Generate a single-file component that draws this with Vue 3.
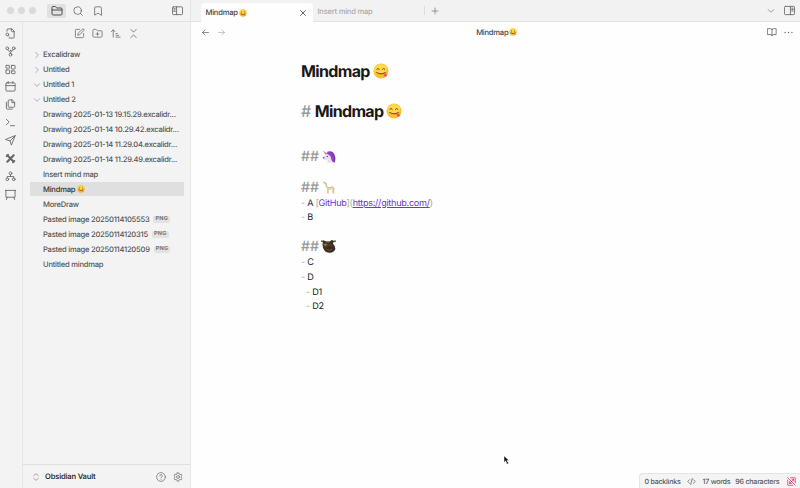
<script setup>
import { h } from 'vue'

const icons = {
  folder: '<path d="M20 20a2 2 0 0 0 2-2V8a2 2 0 0 0-2-2h-7.9a2 2 0 0 1-1.7-.9L9.600 3.900A2 2 0 0 0 7.900 3H4a2 2 0 0 0-2 2v13a2 2 0 0 0 2 2Z"/><path d="M2 10h20"/>',
  search: '<circle cx="11" cy="11" r="9"/><path d="m22.500 22.500-5-5"/>',
  bookmark: '<path d="m20 22-8-5-8 5V4a2 2 0 0 1 2-2h12a2 2 0 0 1 2 2Z"/>',
  left: '<rect x="1" y="4" width="22" height="17" rx="2"/><path d="M10 4v17M4 8h3M4 11h3M4 14h3"/>',
  right: '<rect x="1" y="3" width="22" height="18" rx="2"/><path d="M14 3v18M17 7h3M17 10h3M17 13h3"/>',
  fileSearch: '<path d="M14 2v4a2 2 0 0 0 2 2h4"/><path d="M4.300 7V4a2 2 0 0 1 2-2H15l5 5v13a2 2 0 0 1-2 2H9"/><circle cx="5" cy="14" r="3"/><path d="m9 18-1.500-1.500"/>',
  fork: '<circle cx="12" cy="19" r="3"/><circle cx="5" cy="5" r="3"/><circle cx="19" cy="5" r="3"/><path d="M6 8c1 4 6 3 6 8M18 8c-1 4-6 3-6 8"/><circle cx="12" cy="10" r="1"/>',
  grid: '<rect x="2" y="3" width="8" height="6" rx="1"/><rect x="14" y="3" width="8" height="8" rx="1"/><rect x="2" y="13" width="8" height="8" rx="1"/><rect x="14" y="15" width="8" height="6" rx="1"/>',
  calendar: '<path d="M7 1v4M17 1v4"/><rect x="2" y="4" width="20" height="18" rx="2"/><path d="M2 10h20"/>',
  files: '<path d="M15 2H9a2 2 0 0 0-2 2v12a2 2 0 0 0 2 2h10a2 2 0 0 0 2-2V8Z"/><path d="M15 2v6h6M3 7v13a2 2 0 0 0 2 2h11"/>',
  terminal: '<path d="m3 17 6-6-6-6M12 19h9"/>',
  send: '<path d="m22 2-8 20-3-9-9-3ZM22 2 11 13"/>',
  tools: '<path stroke-width="4.500" d="M5 5l14 14M19 5 5 19"/><path stroke-width="3" d="M3 7l4-4M17 21l4-4"/>',
  network: '<circle cx="12" cy="5" r="3"/><circle cx="5" cy="18" r="3"/><circle cx="19" cy="18" r="3"/><path d="M12 8v4M5 15v-3h14v3"/>',
  board: '<path d="M0 3h24M2 3v15h20V3M5 18l-2 5M19 18l2 5"/>',
  edit: '<path d="M12 3H5a2 2 0 0 0-2 2v14a2 2 0 0 0 2 2h14a2 2 0 0 0 2-2v-7"/><path d="M18.400 2.600a2 2 0 0 1 3 3L12 15l-4 1 1-4Z"/>',
  folderPlus: '<path d="M20 20a2 2 0 0 0 2-2V8a2 2 0 0 0-2-2h-8L9.600 3.900A2 2 0 0 0 7.900 3H4a2 2 0 0 0-2 2v13a2 2 0 0 0 2 2ZM12 10v6M9 13h6"/>',
  sort: '<path d="m3 8 4-4 4 4M7 4v16M13 12h3M13 16h6M13 20h9"/>',
  collapse: '<path d="m6 21 6-6 6 6M6 3l6 6 6-6"/>',
  chevron: '<path d="m4 8 8 8 8-8"/>',
  chevronRight: '<path d="m8 4 8 8-8 8"/>',
  upDown: '<path d="m5 16 7 6 7-6M5 8l7-6 7 6"/>',
  help: '<circle cx="12" cy="12" r="10.500"/><path d="M9 9a3 3 0 0 1 6 1c0 2-3 2-3 4M12 17.500v.2"/>',
  gear: '<path d="M10 2h4l.7 3 2 1.200 3-1 2 3.600-2.300 2v2.400l2.300 2-2 3.600-3-1-2 1.200-.7 3h-4l-.7-3-2-1.200-3 1-2-3.600 2.300-2v-2.400l-2.300-2 2-3.600 3 1 2-1.200Z"/><circle cx="12" cy="12" r="3.500"/>',
  close: '<path d="M18 6 6 18M6 6l12 12"/>',
  plus: '<path d="M3 12h18M12 3v18"/>',
  back: '<path d="m11 19-7-7 7-7M20 12H4"/>',
  forward: '<path d="m13 5 7 7-7 7M4 12h16"/>',
  book: '<path d="M12 6v15M2 4h7c2 0 3 1 3 3 0-2 1-3 3-3h7v14h-7c-2 0-3 1-3 3 0-2-1-3-3-3H2Z"/>',
  dots: '<path stroke-width="3.500" d="M3 12h.1M12 12h.1M21 12h.1"/>',
  code: '<path d="m17 17 5-5-5-5M7 7l-5 5 5 5M14 4l-4 16"/>',
  unsync: '<path d="M2 2l20 20M2 8v14h13M9 2h13v13M7 17 18 6M13 6h5v5M7 12v5h5"/>',
}

const emojis = {
  yum: '<circle cx="12" cy="12" r="11.300" fill="#f9bf2d"/><ellipse cx="11.500" cy="9.500" rx="9.500" ry="8" fill="#ffd94a"/><path d="M5.500 9.500q2-3 4 0M14 9.500q2-3 4 0" fill="none" stroke="#744114" stroke-width="1.500" stroke-linecap="round"/><path d="M5.500 14q6.500 4.500 13 0" fill="none" stroke="#8d481d" stroke-width="1.600" stroke-linecap="round"/><path d="M15.500 17q3-2.500 5 0 .8 3.500-1.500 4-3 0-3.500-4Z" fill="#ed5266"/>',
  yumSmall: '<circle cx="12" cy="12" r="11" fill="#f6b92c"/><ellipse cx="12" cy="8.500" rx="9" ry="6" fill="#ffd640"/><path d="M6 9h3M15 9h3" stroke="#80500f" stroke-width="2.500"/><path d="M5 14q7 6 14 0" fill="none" stroke="#935414" stroke-width="2.500"/><circle cx="17.500" cy="18" r="2" fill="#e8743f"/>',
  unicorn: '<path d="M1 1l8 5-2 3Z" fill="#a58bb0"/><path d="M9 3q9-3 12.500 5 3 7 0 14l-6-3q2-5-1-9Z" fill="#8a35b8"/><path d="M8 7q7-3 9 5 2 5 1 10H8l3-6-5 2-3-2 2-5Z" fill="#e9e0ec"/><path d="M8 4q9-1 11 8l1 9-4-4q0-7-7-10Z" fill="#9a42c4"/><circle cx="9" cy="11" r="1" fill="#36234d"/><path d="M1 13q2-3 4-1l-2 4Z" fill="#b565c8"/>',
  llama: '<path d="M3 1l2 3 3 1 1 8 9-2 4 3-1 9h-2.500l-1-7-6 1v6H9v-8l-3-3-1-6-4-1Z" fill="#e2d8b6"/><path d="M7 5l2 8 10-1 2 3M10 15v8M19 16v7" fill="none" stroke="#bfb083" stroke-width="1.100"/><circle cx="5" cy="5" r=".8" fill="#61573d"/>',
  sloth: '<path d="M0 3q12 4 24 0" fill="none" stroke="#5d6338" stroke-width="2.500"/><path d="M3 2l4 1 1 5 5-2 3-4 4 0-1 5q4 4 4 9-3 7-10 6-8-1-10-9Z" fill="#3c2b20"/><circle cx="7" cy="9" r="4.500" fill="#4d3b29"/><path d="M4 9q3-2.500 6 0-2 3-6 0Z" fill="#94805f"/><path d="M12 10q4-2 6 2M9 17q5 3 9-1" fill="none" stroke="#6a5136" stroke-width="1.500"/>',
}

const Icon = (props) =>
  h('svg', {
    viewBox: '0 0 24 24', width: props.size || 11, height: props.size || 11,
    fill: 'none', stroke: 'currentColor', 'stroke-width': 1.9,
    'stroke-linecap': 'round', 'stroke-linejoin': 'round', innerHTML: icons[props.name],
  })
Icon.props = ['name', 'size']

const Emoji = (props) =>
  h('svg', { viewBox: '0 0 24 24', width: props.size || 8, height: props.size || 8, innerHTML: emojis[props.name] })
Emoji.props = ['name', 'size']

const ribbon = ['fileSearch', 'fork', 'grid', 'calendar', 'files', 'terminal', 'send', 'tools', 'network', 'board']
const tree = [
  { label: 'Excalidraw', arrow: 'chevronRight' },
  { label: 'Untitled', arrow: 'chevronRight' },
  { label: 'Untitled 1', arrow: 'chevron' },
  { label: 'Untitled 2', arrow: 'chevron' },
  { label: 'Drawing 2025-01-13 19.15.29.excalidr...' },
  { label: 'Drawing 2025-01-14 10.29.42.excalidr...' },
  { label: 'Drawing 2025-01-14 11.29.04.excalidr...' },
  { label: 'Drawing 2025-01-14 11.29.49.excalidr...' },
  { label: 'Insert mind map' },
  { label: 'Mindmap', emoji: true, active: true },
  { label: 'MoreDraw' },
  { label: 'Pasted image 20250114105553', tag: 'PNG' },
  { label: 'Pasted image 20250114120315', tag: 'PNG' },
  { label: 'Pasted image 20250114120509', tag: 'PNG' },
  { label: 'Untitled mindmap' },
]
</script>

<template>
  <div class="window">
    <aside class="side">
      <header class="side-top">
        <i class="light"></i><i class="light"></i><i class="light"></i>
        <span class="folder-tab"><Icon name="folder" size="12" /></span>
        <Icon class="search" name="search" size="10" />
        <Icon class="bookmark" name="bookmark" size="10" />
        <Icon class="toggle" name="left" size="11" />
      </header>
      <div class="side-body">
        <nav class="ribbon">
          <span v-for="name in ribbon" :key="name"><Icon :name="name" /></span>
        </nav>
        <section class="explorer">
          <div class="tools">
            <Icon name="edit" /><Icon name="folderPlus" /><Icon name="sort" /><Icon name="collapse" />
          </div>
          <div class="tree">
            <div v-for="row in tree" :key="row.label" class="row" :class="{ active: row.active }">
              <span class="arrow"><Icon v-if="row.arrow" :name="row.arrow" size="8" /></span>
              <span class="label">{{ row.label }}</span>
              <Emoji v-if="row.emoji" class="row-emoji" name="yumSmall" />
              <b v-if="row.tag" class="tag">{{ row.tag }}</b>
            </div>
          </div>
          <footer class="vault">
            <Icon class="updown" name="upDown" size="8" />
            <b>Obsidian Vault</b>
            <Icon name="help" size="10" /><Icon name="gear" size="10" />
          </footer>
        </section>
      </div>
    </aside>

    <main class="main">
      <header class="tabs">
        <div class="tab current"><span>Mindmap</span><Emoji name="yumSmall" /><Icon class="close" name="close" size="10" /></div>
        <div class="tab idle"><span>Insert mind map</span></div>
        <Icon class="plus" name="plus" size="8" />
        <Icon class="down" name="chevron" size="8" />
        <Icon name="right" size="11" />
      </header>
      <div class="view-head">
        <div class="nav"><Icon name="back" size="9" /><Icon class="dim" name="forward" size="9" /></div>
        <div class="view-title"><span>Mindmap</span><Emoji name="yumSmall" /></div>
        <div class="actions"><Icon name="book" size="10" /><Icon name="dots" size="9" /></div>
      </div>
      <article class="editor">
        <div class="title"><span>Mindmap</span><Emoji name="yum" size="16" /></div>
        <div class="title h1"><span><i>#</i> Mindmap</span><Emoji name="yum" size="16" /></div>
        <div class="h2 first"><span>##</span><Emoji name="unicorn" size="14" /></div>
        <div class="h2"><span>##</span><Emoji name="llama" size="14" /></div>
        <div class="line"><i>-</i> A <i>[</i><em>GitHub</em><i>](</i><u>https://github.com/</u><i>)</i></div>
        <div class="line"><i>-</i> B</div>
        <div class="h2 third"><span>##</span><Emoji name="sloth" size="15" /></div>
        <div class="line"><i>-</i> C</div>
        <div class="line"><i>-</i> D</div>
        <div class="line nested"><i>-</i> D1</div>
        <div class="line nested"><i>-</i> D2</div>
      </article>
      <footer class="status">
        <span class="links">0 backlinks</span><Icon name="code" size="9" />
        <span class="words">17 words</span><span class="chars">96 characters</span>
        <Icon class="unsync" name="unsync" size="9" />
      </footer>
    </main>
    <svg class="cursor" viewBox="0 0 8 12" width="7" height="10"><path d="M1 1v8l2-2 1.500 4 2-1-2-3.500H7Z" fill="#111" stroke="#fff" stroke-width=".6" /></svg>
  </div>
</template>

<style>
body { margin: 0; overflow: hidden; }
</style>
<style scoped>
.window { width: 800px; height: 488px; display: flex; position: relative; overflow: hidden; background: #fefefe; color: #555; font: 500 7.6px/15px Inter, "Liberation Sans", sans-serif; letter-spacing: -.24px; text-rendering: geometricPrecision; }
.window * { box-sizing: border-box; }
svg { flex: none; display: block; }
i, em { font-style: normal; }
.side { width: 190.5px; flex: none; display: flex; flex-direction: column; background: #f3f3f3; border-right: 1px solid #e5e5e5; }
.side-top { height: 22px; flex: none; display: flex; align-items: center; border-bottom: 1px solid #e1e1e1; padding: 0 7px 0 6.500px; color: #666; }
.light { width: 7px; height: 7px; border-radius: 50%; background: #dadada; margin-right: 4.300px; }
.folder-tab { width: 19px; height: 14px; margin-left: 7px; border-radius: 2px; background: #e1e1e1; display: grid; place-items: center; color: #484848; }
.search { margin-left: 6.500px; }
.bookmark { margin-left: 10.500px; }
.toggle { margin-left: auto; }
.side-body { display: flex; flex: 1; min-height: 0; }
.ribbon { width: 23px; border-right: 1px solid #e5e5e5; padding: 2.500px 2px 0 0; color: #666; }
.ribbon span { height: 17.850px; display: grid; place-items: center; }
.explorer { flex: 1; min-width: 0; display: flex; flex-direction: column; }
.tools { height: 25px; flex: none; display: flex; align-items: center; justify-content: center; gap: 6.900px; padding: 0 0 2px; color: #777; }
.tree { flex: 1; padding: 0 6px 0 7px; }
.row { height: 15px; display: flex; align-items: center; white-space: nowrap; }
.row.active { height: 14px; margin: 0 0 1px; background: #dfdfdf; color: #333; }
.arrow { width: 13px; flex: none; padding-left: 2.500px; color: #888; }
.row-emoji { margin-left: 2px; }
.tag { margin-left: 4px; height: 7px; padding: 0 2px; background: #e2e2e2; border-radius: 2px; font-size: 5.5px; line-height: 7px; letter-spacing: .3px; color: #777; }
.vault { height: 24px; display: flex; align-items: center; gap: 7px; padding-right: 7px; border-top: 1px solid #dfdfdf; color: #777; }
.vault b { color: #333; margin-right: auto; font-weight: 600; margin-left: -2px; letter-spacing: -.19px; }
.updown { margin-left: 9px; }
.main { flex: 1; min-width: 0; display: flex; flex-direction: column; }
.tabs { height: 22px; flex: none; display: flex; align-items: center; background: #f2f2f2; border-bottom: 1px solid #e3e3e3; padding: 0 5px 0 10px; color: #666; }
.tab { display: flex; align-items: center; }
.current { width: 112px; height: 19px; align-self: flex-end; margin-bottom: -1px; padding: 0 5px 0 5px; gap: 2px; background: #fefefe; border-radius: 4px 4px 0 0; color: #444; }
.current > svg:first-of-type { margin-left: -1px; }
.tab .close { margin-left: auto; color: #444; }
.idle { width: 112px; height: 9px; border-right: 1px solid #ddd; padding: 2px 0 0 5px; color: #aaa; }
.plus { margin-left: 6px; }
.down { margin-left: auto; margin-right: 9px; }
.view-head { height: 20px; flex: none; display: grid; grid-template-columns: 1fr auto 1fr; align-items: center; color: #444; padding: 0 7px 0 10px; }
.nav { display: flex; gap: 7px; color: #666; }
.dim { opacity: .5; }
.view-title { display: flex; align-items: center; gap: 1px; }
.actions { display: flex; justify-content: flex-end; align-items: center; gap: 7px; color: #666; }
.editor { flex: 1; padding-left: 110.500px; color: #222; font-size: 9.1px; font-weight: 400; letter-spacing: -.27px; }
.editor i { color: #aaa; }
.title { display: flex; align-items: center; gap: 3.500px; height: 20px; margin-top: 18.500px; font-size: 16px; line-height: 20px; font-weight: 700; letter-spacing: -.65px; color: #181818; }
.title i { font-weight: 500; color: #999; margin-right: 1px; }
.title.h1 { margin-top: 20.500px; gap: 3px; }
.h2 { height: 15px; margin-top: 15.500px; display: flex; align-items: center; gap: 3.500px; font-size: 14px; color: #999; font-weight: 500; letter-spacing: 0; }
.h2.first { margin-top: 28px; }
.h2.third { margin-top: 14.500px; gap: 2.500px; }
.line { height: 14.900px; line-height: 17px; white-space: pre; }
.third ~ .line { line-height: 17.500px; }
.nested { padding-left: 5px; }
.line em, .line u { color: #6c38cf; text-underline-offset: 1px; }
.status { align-self: flex-end; height: 15px; width: 161px; display: flex; align-items: center; border: 1px solid #e4e4e4; border-width: 1px 0 0 1px; border-radius: 4px 0 0; background: #f4f4f4; padding: 0 4px 0 4.500px; white-space: nowrap; font-size: 7.1px; letter-spacing: -.24px; }
.links { margin-right: 6px; }
.words { margin-left: 7px; }
.chars { margin-left: 5px; }
.unsync { margin-left: auto; color: #d12f66; }
.cursor { position: absolute; left: 503px; top: 455px; }
</style>
